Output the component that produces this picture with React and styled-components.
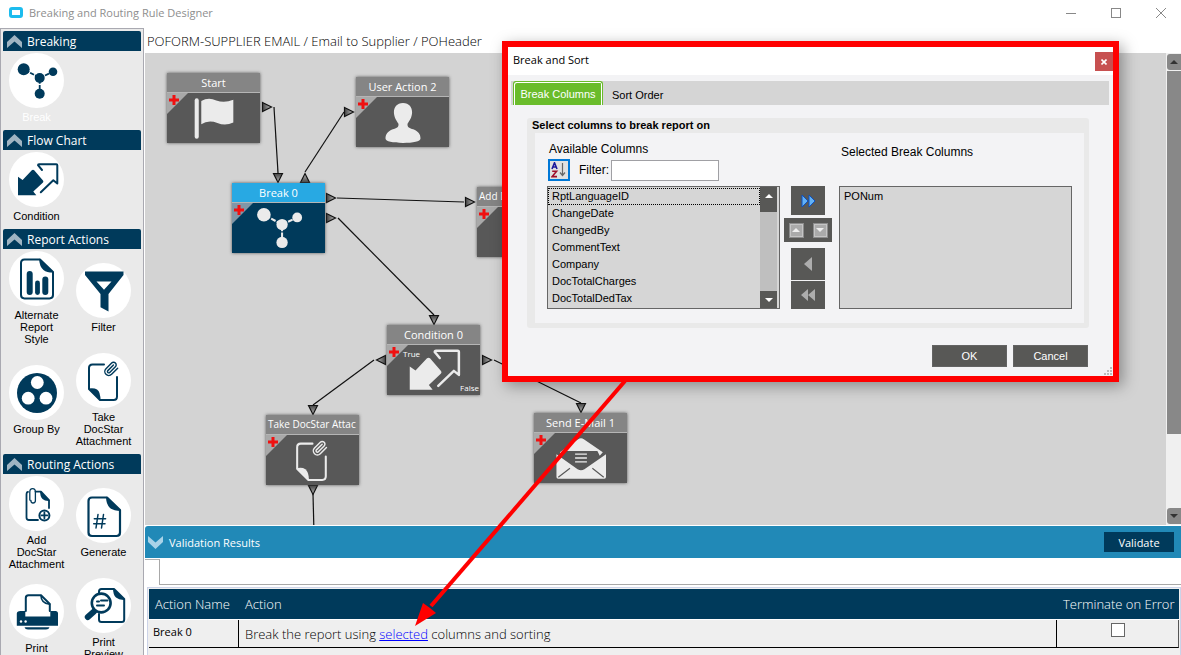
import React, { useState } from 'react';
import styled, { createGlobalStyle } from 'styled-components';

const GlobalStyle = createGlobalStyle`
  * {
    box-sizing: border-box;
  }

  body {
    margin: 0;
    background: #fff;
    font-family: "Open Sans", "Noto Sans", sans-serif;
    font-size: 12px;
    color: #000;
  }

  button {
    margin: 0;
    padding: 0;
    border: none;
    background: none;
    font: inherit;
    color: inherit;
  }
`;

const navy = '#003a5b';

const Window = styled.div`
  position: relative;
  display: flex;
  flex-direction: column;
  height: 100vh;
  overflow: hidden;
`;

const TitleBar = styled.header`
  display: flex;
  align-items: center;
  flex: none;
  height: 28px;
  padding: 0 15px 3px 9px;
  color: #8e8e8e;
`;

const Title = styled.h1`
  flex: 1;
  margin: 0 0 0 6px;
  font-size: 11px;
  font-weight: 400;
`;

const WindowControls = styled.div`
  display: flex;
  gap: 35px;
`;

const WindowButton = styled.button`
  width: 10px;
  height: 10px;

  svg {
    display: block;
  }
`;

const Body = styled.div`
  display: flex;
  flex: 1;
  min-height: 0;
`;

const Sidebar = styled.aside`
  flex: none;
  width: 144px;
  padding: 2px 2px 0;
  overflow: hidden;
  background: #eaeaea;
  border: 1px solid #a9a9b1;
  border-bottom: none;
`;

const SectionHeader = styled.button`
  display: flex;
  align-items: center;
  gap: 5px;
  width: 100%;
  height: 20px;
  padding-left: 4px;
  border-radius: 2px 2px 0 0;
  background: ${navy};
  color: #fff;
  font-size: 12px;
`;

const Tools = styled.div`
  display: grid;
  grid-template-columns: 1fr 1fr;
  align-items: center;
  row-gap: 8px;
  padding: 2px 4px 7px 0;
`;

const Tool = styled.button`
  display: flex;
  flex-direction: column;
  align-items: center;
  gap: 3px;
  color: ${props => props.$active ? '#fff' : '#000'};
  font-family: "Liberation Sans", Arial, sans-serif;
  font-size: 11px;
  line-height: 12px;
`;

const ToolCircle = styled.span`
  display: flex;
  align-items: center;
  justify-content: center;
  width: 55px;
  height: 55px;
  border-radius: 50%;
  background: #fff;
  color: ${navy};
`;

const ToolLabel = styled.span`
  max-width: 60px;
`;

const Main = styled.main`
  display: flex;
  flex: 1;
  flex-direction: column;
  min-width: 0;
  padding-left: 1px;
`;

const Breadcrumb = styled.div`
  flex: none;
  height: 25px;
  padding-left: 2px;
  font-size: 13px;
  font-weight: 300;
  line-height: 26px;
  white-space: nowrap;
`;

const CanvasRow = styled.div`
  display: flex;
  flex: 1;
  min-height: 0;
`;

const Canvas = styled.div`
  position: relative;
  flex: 1;
  overflow: hidden;
  background: #d3d3d3;
`;

const Links = styled.svg`
  position: absolute;
  inset: 0;
  width: 100%;
  height: 100%;
`;

const NodeBox = styled.div`
  position: absolute;
  width: 93px;
  height: 70px;
  background: ${props => props.$selected ? navy : '#585858'};
  box-shadow: 0 0 3px #555;
  color: #ebebeb;
`;

const NodeTitle = styled.div`
  height: 20px;
  padding: 0 2px;
  overflow: hidden;
  border-bottom: 1px solid #b5b5b5;
  background: ${props => props.$selected ? '#28a9e3' : '#858585'};
  color: #fff;
  font-size: ${props => props.$long ? '10px' : '11px'};
  line-height: 19px;
  text-align: ${props => props.$long ? 'left' : 'center'};
  white-space: nowrap;
`;

const NodeBody = styled.div`
  display: flex;
  align-items: center;
  justify-content: center;
  height: 50px;
`;

const Corner = styled.svg`
  position: absolute;
  top: 20px;
  left: 0;
`;

const Outcome = styled.span`
  position: absolute;
  top: ${props => props.$end ? '55px' : '21px'};
  right: ${props => props.$end ? '1px' : 'auto'};
  left: ${props => props.$end ? 'auto' : '16px'};
  color: #fff;
  font-size: 8px;
  line-height: 15px;
`;

const ScrollBar = styled.div`
  display: flex;
  flex: none;
  flex-direction: column;
  gap: 1px;
  width: 15px;
  padding: 1px 0 1px 1px;
  background: #f0f0f0;
`;

const ScrollButton = styled.button`
  display: flex;
  align-items: center;
  justify-content: center;
  height: 16px;
  border-radius: 3px 0 0 3px;
  background: #888;
`;

const ScrollThumb = styled.div`
  flex: 5;
  background: #888;
`;

const ScrollRest = styled.div`
  flex: 1;
`;

const Results = styled.section`
  display: flex;
  flex: none;
  flex-direction: column;
  gap: 1px;
  padding-top: 1px;
`;

const ResultsBar = styled.div`
  display: flex;
  align-items: center;
  gap: 6px;
  height: 32px;
  padding: 0 7px 0 3px;
  border-radius: 3px 0 0 0;
  background: #2189b7;
  color: #fff;
  font-size: 11px;
`;

const ResultsTitle = styled.span`
  flex: 1;
`;

const ValidateButton = styled.button`
  width: 70px;
  height: 20px;
  background: ${navy};
  color: #fff;
`;

const TabStrip = styled.div`
  display: flex;
  height: 26px;
`;

const BlankTab = styled.div`
  width: 15px;
  border-top: 1px solid #b0b0b0;
  border-right: 1px solid #a8a8a8;
`;

const TabLine = styled.div`
  flex: 1;
  border-bottom: 1px solid #a8a8a8;
`;

const TableFrame = styled.div`
  margin: 1px 0 0 2px;
  padding: 1px 1px 7px;
  border: 1px solid #ccd3e8;
  border-bottom: none;
  background: #efefef;
`;

const Table = styled.table`
  width: 100%;
  border-collapse: separate;
  border-spacing: 0;
`;

const HeadCell = styled.th`
  height: 31px;
  padding: 0 4px 0 6px;
  border-bottom: 1px solid #fff;
  background: ${navy};
  color: #fff;
  font-size: 13px;
  font-weight: 300;
  text-align: left;
  white-space: nowrap;
`;

const Cell = styled.td`
  height: 28px;
  padding: ${props => props.$small ? '2px 5px 0 4px' : '0 6px 3px'};
  border-right: ${props => props.$last ? '1px solid #555' : '1px solid #000'};
  border-bottom: 1px solid #000;
  background: #efefef;
  font-size: ${props => props.$small ? '11px' : '13px'};
  font-weight: ${props => props.$small ? 400 : 300};
  line-height: 20px;
  text-align: ${props => props.$last ? 'center' : 'left'};
  vertical-align: ${props => props.$small ? 'top' : 'bottom'};
`;

const ActionLink = styled.a`
  color: #00f;
`;

const CheckBox = styled.input`
  appearance: none;
  display: block;
  width: 14px;
  height: 14px;
  margin: 0 auto 7px;
  border: 1px solid #666;
  background: #fff;
`;

const Dialog = styled.div`
  position: absolute;
  top: 41px;
  left: 502px;
  width: 617px;
  border: 6px solid #f00;
  background: #f3f3f5;
  box-shadow: 4px 4px 14px rgba(0, 0, 0, 0.35);
  font-family: "Liberation Sans", Arial, sans-serif;
`;

const DialogTitle = styled.div`
  display: flex;
  justify-content: space-between;
  height: 28px;
  padding: 5px 0 0 5px;
  background: #fff;
  font-family: "Open Sans", "Noto Sans", sans-serif;
  font-size: 11px;
  line-height: 16px;
`;

const CloseButton = styled.button`
  display: flex;
  align-items: center;
  justify-content: center;
  width: 18px;
  height: 19px;
  background: #c75050;
`;

const DialogTabs = styled.div`
  display: flex;
  height: 24px;
  margin: 6px 4px 0 3px;
  padding-left: 2px;
  background: #d5d5d5;
`;

const DialogTab = styled.button`
  width: ${props => props.$active ? '90px' : 'auto'};
  padding: ${props => props.$active ? '0' : '4px 9px 0'};
  border: ${props => props.$active ? '1px solid #6abc2b' : 'none'};
  border-bottom: none;
  border-radius: 3px 3px 0 0;
  background: ${props => props.$active ? '#6abc2b' : 'transparent'};
  box-shadow: ${props => props.$active ? 'inset 1px 1px 0 #fff, inset -1px 0 0 #fff' : 'none'};
  color: ${props => props.$active ? '#fff' : '#000'};
  font-size: 11px;
`;

const Group = styled.fieldset`
  margin: 13px 24px 0 19px;
  padding: 0 5px 5px 8px;
  border: none;
  border-radius: 3px;
  background: #e9e9e9;
`;

const GroupTitle = styled.div`
  height: 15px;
  margin-left: -3px;
  font-size: 11px;
  font-weight: 700;
  line-height: 15px;
`;

const GroupBody = styled.div`
  display: flex;
  height: 190px;
  padding: 8px 12px 14px;
  background: #f3f3f5;
`;

const ListColumn = styled.div`
  display: flex;
  flex: 1;
  flex-direction: column;
  min-width: 0;
`;

const ListTitle = styled.label`
  height: ${props => props.$tall ? '45px' : '18px'};
  padding: ${props => props.$tall ? '4px 2px 0' : '1px 2px 0'};
  font-size: 12px;
  line-height: 14px;
`;

const FilterRow = styled.div`
  display: flex;
  align-items: center;
  height: 22px;
  margin: 0 0 5px 1px;
  font-size: 12px;
`;

const SortButton = styled.button`
  display: flex;
  align-items: center;
  justify-content: center;
  width: 22px;
  height: 22px;
  margin-right: 9px;
  border: 2px solid #0078d7;
  background: #e1e1e1;
`;

const FilterInput = styled.input`
  width: 108px;
  height: 21px;
  margin-left: 2px;
  border: 1px solid #a0a0a4;
  background: #fff;
`;

const ListFrame = styled.div`
  display: flex;
  flex: 1;
  min-height: 0;
  padding-right: ${props => props.$scroll ? '2px' : '0'};
  border: 1px solid #666;
  background: #d6d6d6;
`;

const ListBox = styled.select`
  flex: 1;
  min-width: 0;
  height: 100%;
  padding: 1px 0 0;
  overflow: hidden;
  border: none;
  border-radius: 0;
  outline: none;
  background: #d6d6d6;
  color: #000;
  font-family: inherit;
  font-size: 11px;
  scrollbar-width: none;
`;

const ListOption = styled.option`
  height: 17px;
  min-height: 17px;
  padding: 2px 4px 0;
  outline: ${props => props.$focused ? '1px dotted #000' : 'none'};
  outline-offset: -1px;
`;

const ListScroll = styled.div`
  display: flex;
  flex-direction: column;
  justify-content: space-between;
  width: 17px;
  background: #bfbfbf;
`;

const ListScrollButton = styled.button`
  display: flex;
  justify-content: center;
  height: ${props => props.$thumb ? '25px' : '17px'};
  padding-top: 7px;
  background: #585856;
`;

const Transfer = styled.div`
  display: flex;
  flex: none;
  flex-direction: column;
  align-items: center;
  width: 48px;
  margin: 45px 7px 0 4px;
`;

const TransferButton = styled.button`
  display: flex;
  flex: ${props => props.$grow || 1};
  align-items: center;
  justify-content: center;
  width: 34px;
  margin-bottom: ${props => props.$gap || 0}px;
  background: #585856;
`;

const MovePair = styled.div`
  display: flex;
  align-items: center;
  justify-content: center;
  gap: 9px;
  width: 100%;
  height: 24px;
  margin-bottom: 6px;
  background: #585856;
`;

const MoveButton = styled.button`
  display: flex;
  align-items: center;
  justify-content: center;
  width: 15px;
  height: 15px;
  border: 1px solid #8c8c8c;
  background: #aaa;
  box-shadow: inset 0 0 0 1px #c4c4c4;
`;

const DialogFooter = styled.div`
  display: flex;
  justify-content: flex-end;
  gap: 6px;
  padding: 17px 25px 9px 0;
`;

const DialogButton = styled.button`
  width: 75px;
  height: 22px;
  border: 1px solid #636363;
  background: #585856;
  color: #fff;
  font-size: 11px;
`;

const Grip = styled.svg`
  position: absolute;
  right: 0;
  bottom: 0;
`;

const Pointer = styled.svg`
  position: absolute;
  top: 380px;
  left: 410px;
  pointer-events: none;
`;

const Clip = () => (
  <path
    d="m21.44 11.05-9.19 9.19a6 6 0 0 1-8.49-8.49l8.57-8.57A4 4 0 1 1 18 8.84l-8.59 8.57a2 2 0 0 1-2.83-2.83l8.49-8.48"
    transform="translate(21.5 2) scale(0.66)"
    fill="none"
    stroke="currentColor"
    strokeWidth="2.2"
    strokeLinecap="round"
  />
);

const line = {
  fill: 'none',
  stroke: 'currentColor',
  strokeWidth: 2,
  strokeLinejoin: 'round',
  strokeLinecap: 'round'
};

const icons = {
  break: (
    <g fill="currentColor">
      <path d="M9 10.3 24.7 19 38 12.7M24.7 19V34.7" fill="none" stroke="currentColor" strokeWidth="1.8" strokeDasharray="4.4 1.2" strokeDashoffset="-7" />
      <circle cx="8.7" cy="10.3" r="6" />
      <circle cx="38" cy="12.7" r="4.3" />
      <circle cx="24.7" cy="19" r="5" />
      <circle cx="24.7" cy="34.7" r="5" />
    </g>
  ),
  condition: (
    <g>
      <path d="M3 18.7V37.3H21.3L18.3 33.6 28 24.4Q28.8 23.4 28 22.4L19.2 12.2Q18 11.2 16.8 12.2L7.6 22Z" fill="currentColor" />
      <path d="M27 12 23 7.2Q23 6.2 24 6.2H41.3Q42.3 6.2 42.3 7.2V25.5L38.3 22.3 25.8 34.3" {...line} />
    </g>
  ),
  report: (
    <g>
      <path d="M25 2.4H9.5Q6 2.4 6 6V38Q6 41.4 9.5 41.4H34.5Q38 41.4 38 38V15Z" {...line} />
      <path d="M24 1.6 38.8 15.6Q32 15.8 28.5 13 24.5 10 24 1.6Z" fill="currentColor" />
      <path d="M14.7 17V35" {...line} strokeWidth="6" />
      <path d="M22.5 26V35.6" {...line} strokeWidth="4.8" />
      <path d="M30.3 22.5V35" {...line} strokeWidth="6" />
    </g>
  ),
  filter: (
    <path d="M3 2.5H41.5V6L26.5 25V42.5L18.5 38.3V25L3 6ZM14.5 12.5 22 20.8 29.5 12.5Z" fill="currentColor" fillRule="evenodd" />
  ),
  group: (
    <g>
      <circle cx="22" cy="22" r="20" fill="currentColor" />
      <g fill="#fff">
        <circle cx="22.3" cy="11.5" r="6.4" />
        <circle cx="13.2" cy="27.2" r="6.4" />
        <circle cx="31" cy="27.2" r="6.4" />
      </g>
    </g>
  ),
  attach: (
    <g>
      <path d="M22 5.5H10.5Q7 5.5 7 9V30L18 41H31.5Q35 41 35 37.5V18" {...line} />
      <path d="M6.5 29.5Q12 28.5 15 30.5 18.5 33 18.5 41.3Z" fill="currentColor" />
      <Clip />
    </g>
  ),
  attachAdd: (
    <g>
      <path d="M23 38H14Q11.5 38 11.5 35.5V12.5Q11.5 10 13 9.8M20.5 9.6H26L34 18V26" {...line} strokeWidth="1.8" />
      <path d="M25 8.8 34.8 19Q30 19.4 27.5 17 25 14.6 25 8.8Z" fill="currentColor" />
      <path d="M14.8 18V10Q14.8 6.6 17.6 6.6 20.4 6.6 20.4 10V18.5Q20.4 21 18 21 15.9 21 15.9 18.5" {...line} strokeWidth="1.3" />
      <circle cx="29.4" cy="33.4" r="5" {...line} />
      <path d="M29.4 30.5V36.3M26.5 33.4H32.3" {...line} strokeWidth="1.8" />
    </g>
  ),
  generate: (
    <g>
      <path d="M25 3.5H10Q6.5 3.5 6.5 7V38.5Q6.5 42 10 42H34.5Q38 42 38 38.5V16Z" {...line} strokeWidth="2.2" />
      <path d="M24 2.6 39 17Q32 17 28 14 24 10.5 24 2.6Z" fill="currentColor" />
      <path d="M16 20.5 14 34M21.5 20.5 19.5 34M12.3 24.8H23.6M11.7 29.8H23" {...line} strokeWidth="1.5" />
    </g>
  ),
  print: (
    <g>
      <path d="M5.5 21H10.3V26.5H35.3V21H40.5Q43 21 43 23.5V35.7H1.8V23.5Q1.8 21 5.5 21Z" fill="currentColor" />
      <path d="M10.8 21V8Q10.8 5.3 13.5 5.3H26L34.8 14V21" {...line} />
      <path d="M26 5.5Q26 13 34.5 14.3" {...line} strokeWidth="1.6" />
      <path d="M9.5 37.3H34.5Q34 39.6 31 39.6H13Q10 39.6 9.5 37.3Z" fill="currentColor" />
      <circle cx="6" cy="31.5" r="1.2" fill="#fff" />
      <circle cx="10.6" cy="31.5" r="1.2" fill="#fff" />
    </g>
  ),
  preview: (
    <g>
      <path d="M17 9V7.5Q17 5 19.5 5H32L42.2 15V35.5Q42.2 38 39.7 38H19.5Q17 38 17 35.5V30" {...line} />
      <path d="M31 4.2 43 16Q37 16.4 34 13.6 31 10.8 31 4.2Z" fill="currentColor" />
      <path d="M12 27.5 5.8 33" {...line} strokeWidth="6" />
      <circle cx="19.2" cy="19" r="9.4" fill="#fff" stroke="currentColor" strokeWidth="2.6" />
      <path d="M15 21.5H22M19 16.5H25.5M15 17.5H17" {...line} strokeWidth="2" />
    </g>
  ),
  flag: (
    <g>
      <path d="M6.8 6.5V38.5" {...line} strokeWidth="3.6" />
      <path d="M10.8 7Q17 3.4 24 6.5 31 9 39 6V26Q32 29.4 25 26.4 17 23.5 10.8 27.5Z" fill="currentColor" />
    </g>
  ),
  user: (
    <path d="M22 5.2C27.5 5.2 30 9 30 13.5 30 18 27.5 21.5 26 23.5 25.5 27 28 27.3 31 28.4 35.5 30 37.4 33 37.4 36.5 37.4 39 31 40.4 22 40.4S6.6 39 6.6 36.5C6.6 33 8.5 30 13 28.4 16 27.3 18.5 27 18 23.5 16.5 21.5 14 18 14 13.5 14 9 16.5 5.2 22 5.2Z" fill="currentColor" />
  ),
  mail: (
    <g>
      <path d="M3.4 17 19.5 5.6Q22 3.8 24.5 5.6L41.2 17 38.5 20 36.4 15.8H7.9L5 20Z" fill="currentColor" />
      <path d="M0.4 18.6 19 31.8Q22 33.6 25 31.8L44 18.6V38.8Q44 40.3 42.5 40.3H1.9Q0.4 40.3 0.4 38.8Z" fill="currentColor" />
      <path d="M12.3 31 2 39M32 31 42 39" stroke="#585858" strokeWidth="1" />
      <path d="M16.8 18.6H27.2M16.8 22H27.2M16.8 25.4H27.2" stroke="currentColor" strokeWidth="1.2" />
    </g>
  )
};

const Icon = ({ name, size }) => (
  <svg width={size} height={size} viewBox="0 0 44 44" aria-hidden="true">{icons[name]}</svg>
);

const Chevron = ({ down }) => (
  <svg width="15" height="13" viewBox="0 0 15 13" aria-hidden="true">
    <path
      d={down ? 'M0 0 7.5 6.5 15 0V6L7.5 13 0 6Z' : 'M0 13 7.5 6.5 15 13V7L7.5 0 0 7Z'}
      fill={down ? '#a9d3e8' : '#9fb4c2'}
    />
  </svg>
);

const SmallArrow = ({ up, color }) => (
  <svg width="8" height="4" viewBox="0 0 8 4" aria-hidden="true">
    <path d={up ? 'M0 4 4 0 8 4Z' : 'M0 0 4 4 8 0Z'} fill={color} />
  </svg>
);

const sections = [
  { title: 'Breaking', tools: [{ label: 'Break', icon: 'break', active: true }] },
  { title: 'Flow Chart', tools: [{ label: 'Condition', icon: 'condition' }] },
  {
    title: 'Report Actions',
    tools: [
      { label: 'Alternate Report Style', icon: 'report' },
      { label: 'Filter', icon: 'filter' },
      { label: 'Group By', icon: 'group' },
      { label: 'Take DocStar Attachment', icon: 'attach' }
    ]
  },
  {
    title: 'Routing Actions',
    tools: [
      { label: 'Add DocStar Attachment', icon: 'attachAdd' },
      { label: 'Generate', icon: 'generate' },
      { label: 'Print', icon: 'print' },
      { label: 'Print Preview', icon: 'preview' }
    ]
  }
];

const nodes = [
  { title: 'Start', icon: 'flag', x: 22, y: 20 },
  { title: 'User Action 2', icon: 'user', x: 211, y: 24 },
  { title: 'Break 0', icon: 'break', x: 87, y: 130, selected: true },
  { title: 'Add DocStar Attac', icon: 'attachAdd', x: 332, y: 134, long: true },
  { title: 'Condition 0', icon: 'condition', iconSize: 55, x: 242, y: 272, outcomes: true },
  { title: 'Take DocStar Attac', icon: 'attach', iconSize: 45, x: 121, y: 362, long: true },
  { title: 'Send E-Mail 1', icon: 'mail', x: 389, y: 360 }
];

const links = [
  [129, 54, 133, 120],
  [160, 119, 199, 59],
  [192, 145, 319, 149],
  [193, 165, 289, 262],
  [229, 307, 168, 352],
  [349, 307, 436, 350],
  [168, 441, 169, 480]
];

// centre of each port and the way it points, in degrees clockwise from right
const ports = [
  [122, 54, 0],
  [204, 59, 0],
  [133, 125, 90],
  [160, 125, -90],
  [186, 145, 0],
  [186, 165, 0],
  [325, 149, 0],
  [289, 267, 90],
  [236, 307, 180],
  [342, 307, 0],
  [168, 357, 90],
  [168, 437, 90],
  [436, 355, 90]
];

const columns = [
  'RptLanguageID',
  'ChangeDate',
  'ChangedBy',
  'CommentText',
  'Company',
  'DocTotalCharges',
  'DocTotalDedTax'
];

const FlowNode = ({ title, icon, iconSize = 50, x, y, selected, long, outcomes }) => (
  <NodeBox $selected={selected} style={{ left: x, top: y }}>
    <NodeTitle $selected={selected} $long={long}>{title}</NodeTitle>
    <NodeBody>
      <Icon name={icon} size={iconSize} />
    </NodeBody>
    <Corner width="21" height="21" aria-hidden="true">
      <path d="M0 0H21L0 21Z" fill={selected ? '#8197a8' : '#a9a9a9'} />
      <path d="M7 2V12M2 7H12" stroke="#f01010" strokeWidth="3" />
    </Corner>
    {outcomes && <Outcome>True</Outcome>}
    {outcomes && <Outcome $end>False</Outcome>}
  </NodeBox>
);

const BreakDialog = () => {
  const [tab, setTab] = useState('Break Columns');
  const [filter, setFilter] = useState('');

  return (
    <Dialog role="dialog" aria-label="Break and Sort">
      <DialogTitle>
        Break and Sort
        <CloseButton aria-label="Close dialog">
          <svg width="6" height="6" viewBox="0 0 6 6">
            <path d="M0.5 0.5 5.5 5.5M5.5 0.5 0.5 5.5" stroke="#fff" strokeWidth="1.6" />
          </svg>
        </CloseButton>
      </DialogTitle>
      <DialogTabs role="tablist">
        {['Break Columns', 'Sort Order'].map(name => (
          <DialogTab key={name} role="tab" $active={tab === name} onClick={() => setTab(name)}>
            {name}
          </DialogTab>
        ))}
      </DialogTabs>
      <Group>
        <GroupTitle>Select columns to break report on</GroupTitle>
        <GroupBody>
          <ListColumn>
            <ListTitle htmlFor="available">Available Columns</ListTitle>
            <FilterRow>
              <SortButton aria-label="Sort alphabetically">
                <svg width="16" height="16" viewBox="0 0 16 16">
                  <path d="M1 7 3.5 0.8 6 7M1.8 5H5.2" fill="none" stroke="#1a1a9c" strokeWidth="1.6" />
                  <path d="M1.2 9.2H5.6L1.2 14.6H6" fill="none" stroke="#a0102c" strokeWidth="1.6" />
                  <path d="M11.5 1V13M9 10.5 11.5 13.5 14 10.5" fill="none" stroke="#666" strokeWidth="1.2" />
                </svg>
              </SortButton>
              <label htmlFor="filter">Filter:</label>
              <FilterInput id="filter" value={filter} onChange={e => setFilter(e.target.value)} />
            </FilterRow>
            <ListFrame $scroll>
              <ListBox id="available" size="7" multiple>
                {columns
                  .filter(name => name.toLowerCase().includes(filter.toLowerCase()))
                  .map((name, i) => <ListOption key={name} $focused={i === 0}>{name}</ListOption>)}
              </ListBox>
              <ListScroll>
                <ListScrollButton $thumb aria-label="Scroll list up"><SmallArrow up color="#fff" /></ListScrollButton>
                <ListScrollButton aria-label="Scroll list down"><SmallArrow color="#fff" /></ListScrollButton>
              </ListScroll>
            </ListFrame>
          </ListColumn>
          <Transfer>
            <TransferButton $grow={29} $gap={3} aria-label="Add column">
              <svg width="15" height="14" viewBox="0 0 15 14">
                <path d="M1 1 7 7 1 13ZM8 1 14 7 8 13Z" fill="#63b1f5" stroke="#0c50c0" />
              </svg>
            </TransferButton>
            <MovePair>
              <MoveButton aria-label="Move up"><SmallArrow up color="#eee" /></MoveButton>
              <MoveButton aria-label="Move down"><SmallArrow color="#eee" /></MoveButton>
            </MovePair>
            <TransferButton $grow={32} $gap={1} aria-label="Remove column">
              <svg width="8" height="14" viewBox="0 0 8 14">
                <path d="M8 0V14L0 7Z" fill="#adadad" />
              </svg>
            </TransferButton>
            <TransferButton $grow={28} aria-label="Remove all columns">
              <svg width="14" height="12" viewBox="0 0 14 12">
                <path d="M7 0V12L0 6ZM14 0V12L7 6Z" fill="#adadad" />
              </svg>
            </TransferButton>
          </Transfer>
          <ListColumn>
            <ListTitle $tall htmlFor="chosen">Selected Break Columns</ListTitle>
            <ListFrame>
              <ListBox id="chosen" size="7" multiple>
                <ListOption>PONum</ListOption>
              </ListBox>
            </ListFrame>
          </ListColumn>
        </GroupBody>
      </Group>
      <DialogFooter>
        <DialogButton>OK</DialogButton>
        <DialogButton>Cancel</DialogButton>
      </DialogFooter>
      <Grip width="9" height="9" aria-hidden="true">
        <path d="M6 0H8V2H6ZM3 3H5V5H3ZM6 3H8V5H6ZM0 6H2V8H0ZM3 6H5V8H3ZM6 6H8V8H6Z" fill="#bbb" />
      </Grip>
    </Dialog>
  );
};

const App = () => {
  const [terminate, setTerminate] = useState(false);

  return (
    <Window>
      <GlobalStyle />
      <TitleBar>
        <svg width="14" height="11" viewBox="0 0 14 11" aria-hidden="true">
          <rect x="1.5" y="1.5" width="11" height="8" rx="1.5" fill="#fff" stroke="#1cbcee" strokeWidth="3" />
        </svg>
        <Title>Breaking and Routing Rule Designer</Title>
        <WindowControls>
          <WindowButton aria-label="Minimize">
            <svg width="10" height="10"><path d="M0 5.5H10" stroke="#888" /></svg>
          </WindowButton>
          <WindowButton aria-label="Maximize">
            <svg width="10" height="10"><rect x="0.5" y="0.5" width="9" height="9" fill="none" stroke="#888" /></svg>
          </WindowButton>
          <WindowButton aria-label="Close">
            <svg width="10" height="10"><path d="M0 0 10 10M10 0 0 10" stroke="#888" /></svg>
          </WindowButton>
        </WindowControls>
      </TitleBar>
      <Body>
        <Sidebar>
          {sections.map(section => (
            <section key={section.title}>
              <SectionHeader>
                <Chevron />
                {section.title}
              </SectionHeader>
              <Tools>
                {section.tools.map(tool => (
                  <Tool key={tool.label} $active={tool.active}>
                    <ToolCircle><Icon name={tool.icon} size={44} /></ToolCircle>
                    <ToolLabel>{tool.label}</ToolLabel>
                  </Tool>
                ))}
              </Tools>
            </section>
          ))}
        </Sidebar>
        <Main>
          <Breadcrumb>POFORM-SUPPLIER EMAIL / Email to Supplier / POHeader</Breadcrumb>
          <CanvasRow>
            <Canvas>
              <Links aria-hidden="true">
                <defs>
                  <linearGradient id="port" x1="0" x2="1">
                    <stop offset="0" stopColor="#444" />
                    <stop offset="1" stopColor="#bbb" />
                  </linearGradient>
                </defs>
                {links.map(([x1, y1, x2, y2]) => (
                  <line key={`${x1}-${y1}`} x1={x1} y1={y1} x2={x2} y2={y2} stroke="#111" strokeWidth="1.2" />
                ))}
                {ports.map(([x, y, turn]) => (
                  <path
                    key={`${x}-${y}`}
                    d="M-4.5 -4.5 4.5 0 -4.5 4.5Z"
                    transform={`translate(${x} ${y}) rotate(${turn})`}
                    fill="url(#port)"
                    stroke="#111"
                    strokeWidth="1.2"
                  />
                ))}
              </Links>
              {nodes.map(node => <FlowNode key={node.title} {...node} />)}
            </Canvas>
            <ScrollBar>
              <ScrollButton aria-label="Scroll up"><SmallArrow up color="#333" /></ScrollButton>
              <ScrollThumb />
              <ScrollRest />
              <ScrollButton aria-label="Scroll down"><SmallArrow color="#333" /></ScrollButton>
            </ScrollBar>
          </CanvasRow>
          <Results>
            <ResultsBar>
              <Chevron down />
              <ResultsTitle>Validation Results</ResultsTitle>
              <ValidateButton>Validate</ValidateButton>
            </ResultsBar>
            <TabStrip>
              <BlankTab />
              <TabLine />
            </TabStrip>
            <TableFrame>
              <Table>
                <colgroup>
                  <col width="90" />
                  <col />
                  <col width="122" />
                </colgroup>
                <thead>
                  <tr>
                    <HeadCell>Action Name</HeadCell>
                    <HeadCell>Action</HeadCell>
                    <HeadCell>Terminate on Error</HeadCell>
                  </tr>
                </thead>
                <tbody>
                  <tr>
                    <Cell $small>Break 0</Cell>
                    <Cell>
                      Break the report using <ActionLink href="#selected">selected</ActionLink> columns and sorting
                    </Cell>
                    <Cell $last>
                      <CheckBox
                        type="checkbox"
                        aria-label="Terminate on Error"
                        checked={terminate}
                        onChange={e => setTerminate(e.target.checked)}
                      />
                    </Cell>
                  </tr>
                </tbody>
              </Table>
            </TableFrame>
          </Results>
        </Main>
      </Body>
      <BreakDialog />
      <Pointer width="220" height="250" aria-hidden="true">
        <path d="M215 1 21 226" stroke="#f00" strokeWidth="4" />
        <path d="M5 246 13 223 20 228 26 233Z" fill="#f00" />
      </Pointer>
    </Window>
  );
};

export default App;
